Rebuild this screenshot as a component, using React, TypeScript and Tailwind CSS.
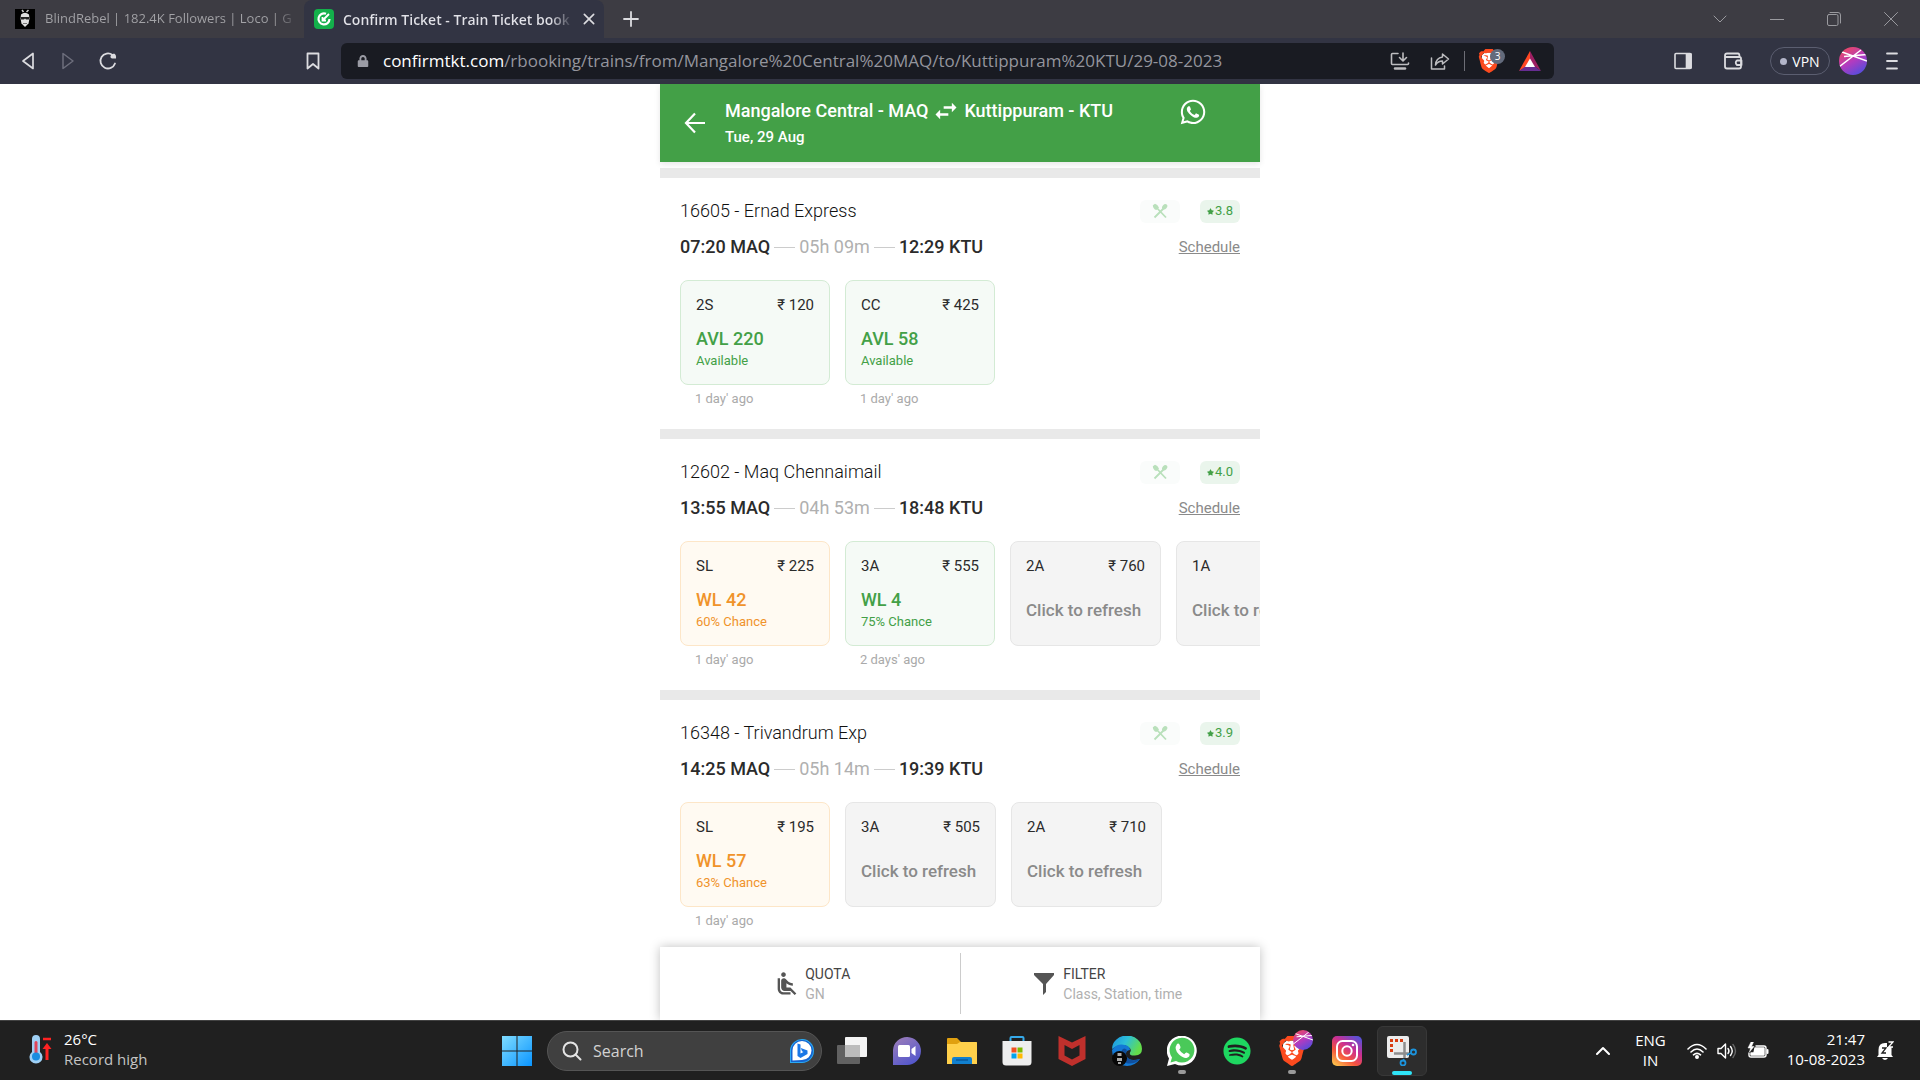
import React from "react";
import { FaWhatsapp, FaStar, FaLock, FaSpotify } from "react-icons/fa";
import { MdAirlineSeatReclineNormal, MdSwapHoriz } from "react-icons/md";
import { SiBrave } from "react-icons/si";

type Tone = "green" | "orange" | "gray";
type Seat = { cls: string; fare?: number; tone: Tone; status?: string; note?: string; age?: string };
type Train = { name: string; from: string; dur: string; to: string; rating: string; seats: Seat[] };

const trains: Train[] = [
  {
    name: "16605 - Ernad Express", from: "07:20 MAQ", dur: "05h 09m", to: "12:29 KTU", rating: "3.8",
    seats: [
      { cls: "2S", fare: 120, tone: "green", status: "AVL 220", note: "Available", age: "1 day' ago" },
      { cls: "CC", fare: 425, tone: "green", status: "AVL 58", note: "Available", age: "1 day' ago" },
    ],
  },
  {
    name: "12602 - Maq Chennaimail", from: "13:55 MAQ", dur: "04h 53m", to: "18:48 KTU", rating: "4.0",
    seats: [
      { cls: "SL", fare: 225, tone: "orange", status: "WL 42", note: "60% Chance", age: "1 day' ago" },
      { cls: "3A", fare: 555, tone: "green", status: "WL 4", note: "75% Chance", age: "2 days' ago" },
      { cls: "2A", fare: 760, tone: "gray" },
      { cls: "1A", tone: "gray" },
    ],
  },
  {
    name: "16348 - Trivandrum Exp", from: "14:25 MAQ", dur: "05h 14m", to: "19:39 KTU", rating: "3.9",
    seats: [
      { cls: "SL", fare: 195, tone: "orange", status: "WL 57", note: "63% Chance", age: "1 day' ago" },
      { cls: "3A", fare: 505, tone: "gray" },
      { cls: "2A", fare: 710, tone: "gray" },
    ],
  },
];

const boxTone: Record<Tone, string> = {
  green: "min-w-[150px] bg-[#f5faf6] border-[#d3ebd4]",
  orange: "min-w-[150px] bg-[#fffaf2] border-[#fde6c8]",
  gray: "min-w-[151px] bg-[#f4f4f4] border-[#e6e6e6]",
};
const textTone: Record<Tone, string> = {
  green: "text-[#43a047]",
  orange: "text-[#f0932b]",
  gray: "text-[#8a8a8a]",
};

function SeatCard({ seat }: { seat: Seat }) {
  return (
    <div className="shrink-0">
      <button className={`flex h-[105px] flex-col rounded-lg border px-[15px] pt-[13px] text-left ${boxTone[seat.tone]}`}>
        <span className="flex w-full justify-between text-[15px] leading-[22px] text-[#2b2b2b]">
          <span>{seat.cls}</span>
          {seat.fare && <span>₹ {seat.fare}</span>}
        </span>
        {seat.status ? (
          <>
            <span className={`mt-[11px] text-[18px] font-medium leading-6 ${textTone[seat.tone]}`}>{seat.status}</span>
            <span className={`text-[13px] leading-5 ${textTone[seat.tone]}`}>{seat.note}</span>
          </>
        ) : (
          <span className={`mt-[21px] whitespace-nowrap text-[17px] font-medium leading-6 ${textTone.gray}`}>Click to refresh</span>
        )}
      </button>
      {seat.age && <p className="pl-[15px] pt-1 text-[13px] leading-5 text-[#aaa]">{seat.age}</p>}
    </div>
  );
}

function CrossedCutlery() {
  return (
    <svg viewBox="0 0 16 16" className="size-4" fill="#b9e0bb" stroke="#b9e0bb">
      <path d="M4 4 14 14.500M12 5 2.500 14.500" strokeWidth="1.8" fill="none" />
      <ellipse cx="12.700" cy="3.700" rx="2.200" ry="3" transform="rotate(42 12.700 3.700)" stroke="none" />
      <path d="M.8 2.200Q1 6 4.400 7L7 4.600Q5.500 1.500 3 .8z" stroke="none" />
    </svg>
  );
}

function TrainCard({ train }: { train: Train }) {
  return (
    <article className="h-[261px] shrink-0 overflow-hidden border-t-10 border-[#e9e9e9] pl-5">
      <div className="mt-[21px] flex items-center pr-5">
        <h2 className="flex-1 text-[18px] font-light leading-6 text-[#111]">{train.name}</h2>
        <span className="flex h-[23px] w-10 items-center justify-center rounded-md bg-[#fafcfb]"><CrossedCutlery /></span>
        <span className="ml-5 flex h-[23px] w-10 items-center justify-center gap-px rounded-md bg-[#eaf5ec] text-[13px] text-[#43a047]">
          <FaStar className="size-[7px]" />{train.rating}
        </span>
      </div>
      <div className="mt-3 flex items-center pr-5 text-[18px] leading-6">
        <span className="font-medium text-[#2b2b2b]">{train.from}</span>
        <span className="mx-1 h-px w-[21px] bg-[#ccc]" />
        <span className="text-[#b0b0b0]">{train.dur}</span>
        <span className="mx-1 h-px w-[21px] bg-[#ccc]" />
        <span className="flex-1 font-medium text-[#2b2b2b]">{train.to}</span>
        <a href="#schedule" className="text-[15px] text-[#8a8a8a] underline">Schedule</a>
      </div>
      <div className="mt-[21px] flex items-start gap-[15px] overflow-hidden">
        {train.seats.map((s) => <SeatCard key={s.cls} seat={s} />)}
      </div>
    </article>
  );
}

function BraveLion({ className }: { className: string }) {
  return (
    <span className={`relative block ${className}`}>
      <svg viewBox="0 0 24 24" className="absolute inset-0 size-full"><path d="M5 6 8 3.500h8L19 6l.5 4-2.500 8-5 3.500L7 18 4.500 10z" fill="#fff" /></svg>
      <SiBrave className="relative size-full text-[#fb4a1e]" />
    </span>
  );
}

function BraveBall({ className, id }: { className: string; id: string }) {
  return (
    <svg viewBox="0 0 28 28" className={className}>
      <defs>
        <linearGradient id={id} x1="0.2" y1="0" x2="0.8" y2="1">
          <stop offset="0" stopColor="#f0485e" /><stop offset=".5" stopColor="#b23bc0" /><stop offset="1" stopColor="#4b4fe0" />
        </linearGradient>
        <clipPath id={`${id}-c`}><circle cx="14" cy="14" r="14" /></clipPath>
      </defs>
      <g clipPath={`url(#${id}-c)`}>
        <rect width="28" height="28" fill={`url(#${id})`} />
        <path d="M0 20 22 3M3 5 28 14M5 9.500 28 7.500" stroke="#fff" strokeWidth="1.4" fill="none" />
      </g>
    </svg>
  );
}

function IconButton({ label, className = "", children }: { label: string; className?: string; children: React.ReactNode }) {
  return <button aria-label={label} className={`flex shrink-0 items-center justify-center ${className}`}>{children}</button>;
}

const line = { fill: "none", stroke: "currentColor", strokeLinecap: "round", strokeLinejoin: "round" } as const;

function BrowserChrome() {
  return (
    <header className="shrink-0 font-['Open_Sans',sans-serif] text-[#dcdce0]">
      <div className="flex h-[38px] items-center bg-[#3d3c43]">
        <div className="flex h-full w-[304px] items-center pl-[15px]">
          <svg viewBox="0 0 20 20" className="size-5 shrink-0">
            <rect width="20" height="20" fill="#000" />
            <path d="M7 1l1.500 2M13.500 1l-2 2" stroke="#ccc" strokeWidth="1.500" />
            <path d="M6 5.500Q10 2 14 5.500l.5 4-1 5L10 18l-3.500-3.500-1-5z" fill="#e0e0e0" />
            <path d="M5.500 8h9L14 10.500h-3L10 9.500l-1 1H6z" fill="#222" />
            <path d="M8 14.500h4" stroke="#777" />
          </svg>
          <span className="ml-[10px] w-[254px] overflow-hidden whitespace-nowrap bg-linear-to-r from-[#a3a3a7] from-90% to-transparent bg-clip-text text-[13px] text-transparent">BlindRebel | 182.4K Followers | Loco | G</span>
        </div>
        <div className="flex h-full w-[300px] items-center rounded-t-lg bg-[#323443] pl-[10px]">
          <svg viewBox="0 0 20 20" className="size-5 shrink-0">
            <rect width="20" height="20" rx="4" fill="#13b04b" />
            <path d="M12 4.800A5.500 5.500 0 1 0 15.500 10" fill="none" stroke="#fff" strokeWidth="2.200" />
            <path d="M8.500 8v3.500H12M9 11l6-6" fill="none" stroke="#fff" strokeWidth="1.800" />
          </svg>
          <span className="ml-[9px] w-[230px] overflow-hidden whitespace-nowrap bg-linear-to-r from-[#e2e2e8] from-90% to-transparent bg-clip-text text-[14px] font-semibold text-transparent">Confirm Ticket - Train Ticket book</span>
          <IconButton label="Close tab" className="ml-[6px] size-5">
            <svg viewBox="0 0 12 12" className="size-[14px]" {...line} strokeWidth="1.4"><path d="m2 2 8 8M10 2 2 10" /></svg>
          </IconButton>
        </div>
        <IconButton label="New tab" className="ml-[15px] size-6">
          <svg viewBox="0 0 16 16" className="size-4" {...line} strokeWidth="1.8"><path d="M8 1v14M1 8h14" /></svg>
        </IconButton>
        <div className="ml-auto flex items-center gap-[33px] pr-[17px] text-[#9a9a9f]">
          <IconButton label="Search tabs" className="size-6"><svg viewBox="0 0 14 14" className="size-[14px]" {...line}><path d="m1 4 6 6 6-6" /></svg></IconButton>
          <IconButton label="Minimize" className="size-6"><svg viewBox="0 0 14 14" className="size-[14px]" {...line}><path d="M0 7.500h14" /></svg></IconButton>
          <IconButton label="Restore" className="size-6"><svg viewBox="0 0 14 14" className="size-[14px]" {...line}><rect x=".5" y="2.500" width="10.500" height="11" rx="1.500" /><path d="M3 .5h8q2.500 0 2.500 2.500v8" /></svg></IconButton>
          <IconButton label="Close" className="size-6"><svg viewBox="0 0 14 14" className="size-[14px]" {...line}><path d="m.5.5 13 13M13.500.5l-13 13" /></svg></IconButton>
        </div>
      </div>
      <div className="flex h-[46px] items-center bg-[#323443] px-4">
        <IconButton label="Back" className="size-6"><svg viewBox="0 0 20 20" className="size-5" {...line} strokeWidth="1.7"><path d="M15 2.500v15L5 10z" /></svg></IconButton>
        <IconButton label="Forward" className="ml-4 size-6 text-[#6d6e7c]"><svg viewBox="0 0 20 20" className="size-5" {...line} strokeWidth="1.5"><path d="M5 2.500v15L15 10z" /></svg></IconButton>
        <IconButton label="Reload" className="ml-4 size-6"><svg viewBox="0 0 20 20" className="size-5" {...line} strokeWidth="1.8"><path d="M17 12.500A7.500 7.500 0 1 1 14.500 4" /><path d="M16 2.500q2.500 1 2 5h-4q-2.500-1-1-3.500z" fill="currentColor" stroke="none" /></svg></IconButton>
        <IconButton label="Bookmark" className="ml-[181px] size-6"><svg viewBox="0 0 20 20" className="size-5" {...line} strokeWidth="1.8"><path d="M4.500 2.500h11v15L10 13l-5.500 4.500z" /></svg></IconButton>
        <div className="ml-4 flex h-9 min-w-0 flex-1 items-center rounded-md bg-[#191b22] pl-4">
          <FaLock className="size-3 shrink-0 text-[#9b9ca5]" />
          <a href="#address" className="ml-[14px] flex-1 whitespace-nowrap text-[17px] text-[#94959d]"><span className="text-white">confirmtkt.com</span>/rbooking/trains/from/Mangalore%20Central%20MAQ/to/Kuttippuram%20KTU/29-08-2023</a>
          <IconButton label="Install" className="size-6 text-[#bdbdc0]">
            <svg viewBox="0 0 20 20" className="size-5" {...line} strokeWidth="1.6"><path d="M8 2.500H2.500q-1 0-1 1v9q0 1 1 1h15q1 0 1-1V12M13 2v7.500M9.500 6.500 13 10l3.500-3.500" /><path d="M5 17.500h10" strokeWidth="2.500" /></svg>
          </IconButton>
          <IconButton label="Share" className="ml-4 size-6 text-[#bdbdc0]">
            <svg viewBox="0 0 20 20" className="size-5" {...line} strokeWidth="1.5"><path d="M1.500 7v11h13v-3M12.500 3l6 5-6 5v-3Q8 10 5.500 14 6 7 12.500 6z" /></svg>
          </IconButton>
          <span className="mx-3 h-5 w-px bg-[#6d6e76]" />
          <button aria-label="Brave Shields" className="relative size-6 shrink-0"><BraveLion className="size-6" /><span className="absolute top-0 left-[13px] flex size-[15px] items-center justify-center rounded-full bg-[#636b7c] text-[10px] text-white">3</span></button>
          <IconButton label="Rewards" className="ml-[17px] mr-3 size-6">
            <svg viewBox="0 0 22 20" className="h-5 w-[22px]"><path d="M11 0 0 20 11 14z" fill="#ff4724" /><path d="M11 0 22 20 11 12z" fill="#9e1f63" /><path d="M0 20h22L11 12z" fill="#662d91" /><path d="M11 7.500 6 16h10z" fill="#fff" /></svg>
          </IconButton>
        </div>
        <IconButton label="Sidebar" className="ml-[117px] size-6"><svg viewBox="0 0 18 18" className="size-[18px]" {...line} strokeWidth="1.6"><rect x="1" y="1.500" width="16" height="15" rx="1" /><path d="M12.500 2H17v14h-4.500z" fill="currentColor" /></svg></IconButton>
        <IconButton label="Wallet" className="ml-[26px] size-6"><svg viewBox="0 0 20 20" className="size-5" {...line} strokeWidth="1.8"><path d="M2 4.500v11q0 2 2 2h12q2 0 2-2v-8q0-1.500-1.500-1.500H3.500Q2 6 2 4.500 2 2.500 4 2.500h11q1.500 0 1.500 3M18.500 9.500H14q-2.500 2 0 4.500h4.500z" /></svg></IconButton>
        <button className="ml-[25px] flex h-7 w-[60px] items-center justify-center gap-[5px] rounded-full border border-[#5b5e70] text-[14px] text-white"><span className="size-[7px] rounded-full bg-[#b3b5c9]" />VPN</button>
        <IconButton label="Profile" className="ml-[9px] size-7"><BraveBall id="ball-a" className="size-7" /></IconButton>
        <IconButton label="Menu" className="ml-[13px] size-6"><svg viewBox="0 0 16 18" className="h-[18px] w-4" {...line} strokeWidth="1.8"><path d="M3 1.500h10M3 9h10M3 16.500h10" /></svg></IconButton>
      </div>
    </header>
  );
}

function TaskIcon({ label, dot, active, children }: { label: string; dot?: boolean; active?: boolean; children: React.ReactNode }) {
  return (
    <button aria-label={label} className={`relative flex size-[50px] shrink-0 items-center justify-center rounded-md ${active ? "border border-[#383838] bg-[#2d2d2d]" : ""}`}>
      {children}
      {dot && <span className="absolute bottom-[2px] h-1 w-2 rounded-full bg-[#9a9a9a]" />}
      {active && <span className="absolute bottom-0 h-1 w-5 rounded-full bg-[#2fe4f7]" />}
    </button>
  );
}

function Taskbar() {
  return (
    <footer className="z-10 flex h-[60px] shrink-0 items-center border-t border-[#424242] bg-[#202020] font-['Open_Sans',sans-serif] text-[15px] text-white">
      <div className="flex flex-1 items-center pb-1 pl-7">
        <svg viewBox="0 0 24 30" className="h-[30px] w-6">
          <path d="M4 5a4 4 0 0 1 8 0v13a6.500 6.500 0 1 1-8 0z" fill="#9fd0f5" />
          <path d="M6.500 8q1.500-2 3 0v13h-3z" fill="#e0455a" /><circle cx="8" cy="22.500" r="4" fill="#1b8de0" />
          <path d="M15 5h8" stroke="#f22" strokeWidth="2.500" /><path d="M19 26V12" stroke="#f22" strokeWidth="3" /><path d="M14.500 15 19 9l4.500 6z" fill="#f22" />
        </svg>
        <div className="ml-3 leading-5"><p>26°C</p><p className="text-[#c4c4c4]">Record high</p></div>
      </div>
      <div className="flex items-center gap-[5px] pr-[3px]">
        <TaskIcon label="Start">
          <svg viewBox="0 0 30 30" className="size-[30px]"><defs><linearGradient id="win" x1="0" y1="0" x2="1" y2="1"><stop offset="0" stopColor="#7fdcff" /><stop offset="1" stopColor="#0a95ff" /></linearGradient></defs><path d="M0 0h14.500v14.500H0zM15.500 0H30v14.500H15.500zM0 15.500h14.500V30H0zM15.500 15.500H30V30H15.500z" fill="url(#win)" /></svg>
        </TaskIcon>
        <div className="flex h-10 w-[275px] items-center rounded-full border border-[#555] bg-[#404040] pl-[14px] pr-[6px]">
          <svg viewBox="0 0 20 20" className="size-5 shrink-0" {...line} stroke="#e4e4e4" strokeWidth="2"><circle cx="8.500" cy="8.500" r="7" /><path d="m13.500 13.500 5 5" /></svg>
          <input aria-label="Search" placeholder="Search" className="ml-[11px] min-w-0 flex-1 bg-transparent text-[16px] placeholder:text-[#d2d2d2] focus:outline-none" />
          <svg viewBox="0 0 26 26" className="size-[26px] shrink-0"><path d="M1 25V12A12 12 0 1 1 13 25z" fill="#2aa9f2" /><path d="M2 24V13A11 11 0 1 1 13 24z" fill="#1464d2" /><path d="M3.500 22.500V12.500A9.500 9.500 0 1 1 13 22z" fill="#fff" /><path d="M8.500 5.500 11.500 6.500v9l3-1.500-1.500-.8-1.200-3.200 6.700 2.500v3.500L11.500 20l-3-2z" fill="#1977e6" /></svg>
        </div>
        <TaskIcon label="Task view">
          <svg viewBox="0 0 30 30" className="size-[30px]"><rect x="8" y="1" width="22" height="20" rx="1" fill="#f4f4f4" /><rect x="0" y="9" width="23" height="19" rx="1" fill="#777" fillOpacity=".75" /><path d="M8 9h15v12H8z" fill="#bcbcbc" /></svg>
        </TaskIcon>
        <TaskIcon label="Chat">
          <svg viewBox="0 0 30 30" className="size-[30px]"><defs><linearGradient id="chat" x1="0" y1="0" x2=".6" y2="1"><stop offset="0" stopColor="#a07fb8" /><stop offset="1" stopColor="#5558cc" /></linearGradient></defs><path d="M1 29V14A14 14 0 1 1 15 29z" fill="url(#chat)" /><rect x="6" y="9" width="12" height="12" rx="1.500" fill="#fff" /><path d="m19.500 13 4-3v10l-4-3z" fill="#fff" /></svg>
        </TaskIcon>
        <TaskIcon label="File Explorer">
          <svg viewBox="0 0 32 28" className="h-7 w-8"><path d="M1 2q0-1 1-1h9l4 4h15q1 0 1 1v6H1z" fill="#e0a010" /><path d="M1 7h10l3-2h16q1 0 1 1v21H1z" fill="#ffd04b" /><path d="M6 27v-5q0-2 2-2h16q2 0 2 2v5z" fill="#1180cf" /><path d="M10 23h12" stroke="#0a5a9c" strokeWidth="1.500" /></svg>
        </TaskIcon>
        <TaskIcon label="Microsoft Store">
          <svg viewBox="0 0 30 30" className="size-[30px]"><path d="M8.500 7V2q0-1 1-1h11q1 0 1 1v5" fill="none" stroke="#35a9ea" strokeWidth="2" /><path d="M.5 5h29v21q0 3.500-3.500 3.500H4Q.5 29.500.5 26z" fill="#eee" /><path d="M9.500 11.500h5v5h-5z" fill="#f25022" /><path d="M15.500 11.500h5v5h-5z" fill="#7fba00" /><path d="M9.500 17.500h5v5h-5z" fill="#00a4ef" /><path d="M15.500 17.500h5v5h-5z" fill="#ffb900" /></svg>
        </TaskIcon>
        <TaskIcon label="McAfee">
          <svg viewBox="0 0 28 30" className="h-[30px] w-7"><path d="M.5 0 14 6.500 27.500 0v23L14 30 .5 23zM6.500 9v10.500L14 23.500l7.500-4V9L14 13z" fill="#c0302c" fillRule="evenodd" /></svg>
        </TaskIcon>
        <TaskIcon label="Edge">
          <svg viewBox="0 0 30 30" className="size-[30px]"><defs><linearGradient id="edge" x1="0" y1="0" x2="1" y2=".4"><stop offset="0" stopColor="#1a8fe0" /><stop offset=".5" stopColor="#2dc0d8" /><stop offset="1" stopColor="#63dd4b" /></linearGradient></defs><path d="M0 13A15 13.500 0 0 1 30 13q0 6-7 6.500-6 .5-5-3 2-3-1-5Q10 6 0 13z" fill="url(#edge)" /><path d="M0 14q5-7 13-5 5 1 5 5-5 0-4 6 3 6 14 3-5 7-13 7Q1 29 0 14z" fill="#1379d6" /><path d="M10 14q-3 8 4 13 8 2 14-4-9 3-13-2-2-4 0-7-3-3-5 0z" fill="#0f4f9e" /><circle cx="7.500" cy="22.500" r="7.500" fill="#080808" /><path d="M5.500 17h4v3h-4zM5 22h5v3H5zM6 26h3v2H6z" fill="#aaa" /></svg>
        </TaskIcon>
        <TaskIcon label="WhatsApp" dot>
          <svg viewBox="0 0 30 30" className="size-[30px]"><path d="M0 30 2 22.500A15 15 0 1 1 8 28z" fill="#fff" /><path d="M3.500 26.500 5 21.500A12.400 12.400 0 1 1 9 25z" fill="#4ac959" /><path d="M10 8q1.500-1 2.500.5L13.500 11q.3 1-1.300 2.500 2 3.500 5 4.700 1.600-2.200 2.600-1.700l2.700 1.500q.7 3-3 3.900-3 .6-7.500-3.400Q6.500 13 10 8z" fill="#fff" /></svg>
        </TaskIcon>
        <TaskIcon label="Spotify"><FaSpotify className="size-7 text-[#1ed760]" /></TaskIcon>
        <TaskIcon label="Brave" dot><BraveLion className="size-[30px]" /><BraveBall id="ball-b" className="absolute right-1 top-1 size-5" /></TaskIcon>
        <TaskIcon label="Instagram">
          <svg viewBox="0 0 30 30" className="size-[30px]"><defs><linearGradient id="ig" x1=".1" y1="1" x2=".8" y2="0"><stop offset="0" stopColor="#fdc84c" /><stop offset=".35" stopColor="#f5553d" /><stop offset=".65" stopColor="#cb2f92" /><stop offset="1" stopColor="#5b50d6" /></linearGradient></defs><rect width="30" height="30" rx="5" fill="url(#ig)" /><rect x="5" y="5" width="20" height="20" rx="5.500" fill="none" stroke="#fff" strokeWidth="2" /><circle cx="15" cy="15" r="4.700" fill="none" stroke="#fff" strokeWidth="2" /><circle cx="21" cy="9" r="1.300" fill="#fff" /></svg>
        </TaskIcon>
        <TaskIcon label="Snipping Tool" active>
          <svg viewBox="0 0 30 30" className="size-[30px]"><rect x="0" y="0" width="22" height="22" rx="2" fill="#ececec" /><path d="M4.500 16V4.500H17" fill="none" stroke="#d83b10" strokeWidth="3" strokeDasharray="3 2" /><path d="M7 17.500h15M17.500 6v16" stroke="#8d8d8d" strokeWidth="2.500" /><circle cx="26.500" cy="16" r="2.500" fill="none" stroke="#1c93dc" strokeWidth="1.800" /><circle cx="16" cy="27" r="2.500" fill="none" stroke="#1c93dc" strokeWidth="1.800" /><path d="m20 19 4-2M17 23l-1 2" stroke="#1c93dc" strokeWidth="1.500" /></svg>
        </TaskIcon>
      </div>
      <div className="flex flex-1 items-center justify-end pr-[26px]">
        <IconButton label="Show hidden icons" className="size-5"><svg viewBox="0 0 14 14" className="size-[14px]" {...line} strokeWidth="2"><path d="m1 10 6-6 6 6" /></svg></IconButton>
        <button className="ml-[22px] pb-[2px] text-center leading-5"><p>ENG</p><p>IN</p></button>
        <svg viewBox="0 0 20 16" className="ml-[21px] h-4 w-5" {...line} strokeWidth="1.6"><path d="M1 6q9-9 18 0M4 9q6-6 12 0M6.500 11.800q3.500-3 7 0" /><circle cx="10" cy="14" r="1.200" fill="currentColor" /></svg>
        <svg viewBox="0 0 20 18" className="ml-[10px] h-[18px] w-5" {...line} strokeWidth="1.400"><path d="M1 6.500h3L8.500 2v14L4 11.500H1zM11 6.500q2 2.500 0 5M13.500 4.500q3.500 4.500 0 9" /><path d="M16 2.500q5 6.500 0 13" stroke="#666" /></svg>
        <svg viewBox="0 0 22 18" className="ml-[10px] h-[18px] w-[22px]" {...line} strokeWidth="1.400"><path d="M9 4h8q2 0 2 2v7q0 2-2 2H4q-2 0-2-2v-2" /><path d="M8 6h9v7H4v-2h3z" fill="currentColor" /><path d="M20.500 8v3" strokeWidth="2" /><path d="M4 0 1 6h2.500L2.500 10 7 4.500H4.500L6.500 0z" fill="currentColor" strokeWidth=".5" /></svg>
        <div className="ml-[18px] pb-1 text-right leading-5"><p>21:47</p><p>10-08-2023</p></div>
        <svg viewBox="0 0 18 20" className="ml-[11px] h-5 w-[18px]"><path d="M2.500 14V9Q2.500 2 9 2h2v4h4.500v8l1.500 2H1zM6 17h6q-3 4-6 0z" fill="#fff" /><path d="M6 7h4l-4 5h4" fill="none" stroke="#202020" strokeWidth="1.300" /><path d="M12.500 1H17l-4.500 5H17" fill="none" stroke="#fff" strokeWidth="1.300" /></svg>
      </div>
    </footer>
  );
}

export default function App() {
  return (
    <div className="flex h-screen flex-col overflow-hidden bg-white font-[Roboto,sans-serif]">
      <BrowserChrome />
      <main className="mx-auto flex min-h-0 w-full max-w-[600px] flex-1 flex-col">
        <div className="z-10 flex h-[78px] shrink-0 bg-[#43a047] pl-6 pr-[53px] text-white shadow-[0_2px_6px_rgba(0,0,0,0.1)]">
          <IconButton label="Back to search" className="mt-7 size-[22px]"><svg viewBox="0 0 22 22" className="size-[22px]" {...line} strokeLinecap="butt" strokeLinejoin="miter" strokeWidth="2.200"><path d="M21 11H2.500M11 1.500 2 11l9 9.500" /></svg></IconButton>
          <div className="ml-[19px] flex-1 pt-[15px]">
            <h1 className="flex h-6 items-center text-[18px] font-medium leading-6">
              Mangalore Central - MAQ
              <MdSwapHoriz className="mx-1 size-7" />
              Kuttippuram - KTU
            </h1>
            <p className="mt-1 text-[15px] font-medium leading-5">Tue, 29 Aug</p>
          </div>
          <IconButton label="WhatsApp" className="mt-[14px] size-7"><FaWhatsapp className="size-7" /></IconButton>
        </div>
        <section className="flex min-h-0 flex-1 flex-col overflow-hidden pt-[6px]">
          {trains.map((t) => <TrainCard key={t.name} train={t} />)}
        </section>
        <nav className="z-10 flex h-[73px] shrink-0 items-center bg-white shadow-[0_0_10px_rgba(0,0,0,0.25)]">
          <button className="flex h-[61px] flex-1 items-center justify-center gap-1 border-r border-[#ccc] pl-1 text-left">
            <MdAirlineSeatReclineNormal className="size-7 text-[#555]" />
            <span className="flex flex-col text-[14px] leading-5"><span className="text-[#444]">QUOTA</span><span className="text-[#b0b0b0]">GN</span></span>
          </button>
          <button className="flex h-[61px] flex-1 items-center justify-center gap-[9px] pr-1 text-left">
            <svg viewBox="0 0 20 24" className="h-6 w-5"><path d="M0 1h20v2l-8 9v8l-3 3V12L0 3z" fill="#555" /></svg>
            <span className="flex flex-col text-[14px] leading-5"><span className="text-[#444]">FILTER</span><span className="text-[#b0b0b0]">Class, Station, time</span></span>
          </button>
        </nav>
      </main>
      <Taskbar />
    </div>
  );
}
